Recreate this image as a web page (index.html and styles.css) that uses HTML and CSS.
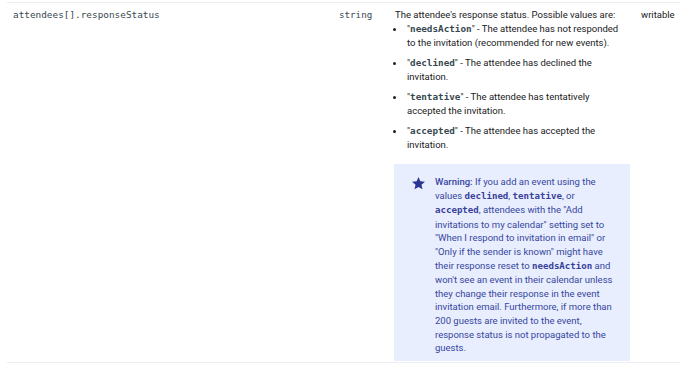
FILE: index.html
```html
<!DOCTYPE html>
<html>
<head>
<meta charset="utf-8">
<link rel="stylesheet" href="styles.css">
</head>
<body>
<table class="params">
  <colgroup>
    <col class="c-name">
    <col class="c-type">
    <col class="c-desc">
    <col class="c-flag">
  </colgroup>
  <tr>
    <td class="name"><code>attendees[].responseStatus</code></td>
    <td class="type"><code>string</code></td>
    <td class="desc">
      <div class="lead">The attendee's response status. Possible values are:</div>
      <ul class="values">
        <li>"<code>needsAction</code>" - The attendee has not responded to the invitation (recommended for new events).</li>
        <li>"<code>declined</code>" - The attendee has declined the invitation.</li>
        <li>"<code>tentative</code>" - The attendee has tentatively accepted the invitation.</li>
        <li>"<code>accepted</code>" - The attendee has accepted the invitation.</li>
      </ul>
      <aside class="special">
        <svg class="star" viewBox="2 2 20 20" width="13" height="13"><path d="M12 17.27L18.18 21l-1.64-7.03L22 9.24l-7.19-.61L12 2 9.19 8.63 2 9.24l5.46 4.73L5.82 21z" fill="currentColor"/></svg>
        <div class="special-text"><strong>Warning:</strong> If you add an event using the values <code>declined</code>, <code>tentative</code>, or <code>accepted</code>, attendees with the "Add invitations to my calendar" setting set to "When I respond to invitation in email" or "Only if the sender is known" might have their response reset to <code>needsAction</code> and won't see an event in their calendar unless they change their response in the event invitation email. Furthermore, if more than 200 guests are invited to the event, response status is not propagated to the guests.</div>
      </aside>
    </td>
    <td class="flag">writable</td>
  </tr>
</table>
</body>
</html>
```

FILE: styles.css
```css
html, body {
  margin: 0;
  background: #ffffff;
}
body {
  padding: 2px 10px 0 7px;
  font-family: Roboto, "Noto Sans", Arial, sans-serif;
  font-size: 9.5px;
  line-height: 14px;
  color: #202124;
}
.params {
  width: 673px;
  table-layout: fixed;
  border-collapse: collapse;
  border-top: 1px solid #eceff1;
  border-bottom: 1px solid #eceff1;
}
.c-name { width: 326px; }
.c-type { width: 56px; }
.c-desc { width: 246px; }
.c-flag { width: 45px; }
.params td {
  vertical-align: top;
  padding: 5px 0 1px 6px;
}
code {
  font-family: "DejaVu Sans Mono", "Liberation Mono", monospace;
}
.name code {
  font-size: 9.4px;
  color: #37474f;
}
.type code {
  font-size: 9.2px;
  color: #37474f;
}
.desc {
  padding-right: 9px !important;
}
.values {
  margin: 0 0 0 12px;
  padding: 0;
  list-style: none;
}
.values li {
  position: relative;
  margin-bottom: 6px;
}
.values li::before {
  content: "";
  position: absolute;
  left: -14px;
  top: 6px;
  width: 3px;
  height: 3px;
  border-radius: 50%;
  background: #202124;
}
.values code {
  font-size: 9.3px;
  font-weight: bold;
  color: #37474f;
}
.special {
  display: flex;
  margin: 12px 0 0 -1px;
  width: 236px;
  box-sizing: border-box;
  padding: 11px 14px 6px 18px;
  background: #e8eefd;
  color: #3746a0;
}
.star {
  flex: none;
  color: #283593;
  margin: 2px 10px 0 0;
}
.special-text {
  flex: 1;
  line-height: 13.6px;
}
.special-text strong {
  font-weight: 500;
}
.special-text code {
  font-size: 9.1px;
  font-weight: bold;
  color: #37409a;
}
```
